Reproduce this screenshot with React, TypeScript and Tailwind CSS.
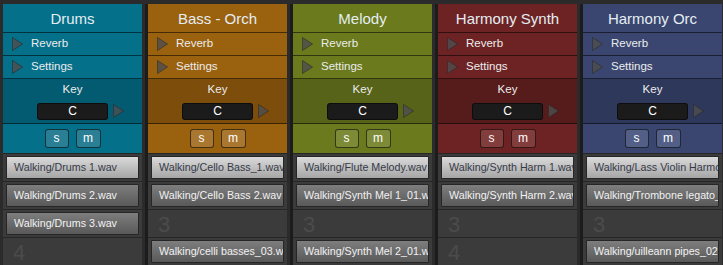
import React from "react";

type Col = {
  title: string;
  main: string;
  key: string;
  btn: string;
  clips: (string | null)[];
};

const cols: Col[] = [
  {
    title: "Drums",
    main: "bg-[#04708a]",
    key: "bg-[#035b71]",
    btn: "bg-[#2b7f94]",
    clips: ["Walking/Drums 1.wav", "Walking/Drums 2.wav", "Walking/Drums 3.wav", null],
  },
  {
    title: "Bass - Orch",
    main: "bg-[#9a610f]",
    key: "bg-[#7c4d0b]",
    btn: "bg-[#a9772f]",
    clips: ["Walking/Cello Bass_1.wav", "Walking/Cello Bass 2.wav", null, "Walking/celli basses_03.wav"],
  },
  {
    title: "Melody",
    main: "bg-[#6a7a1d]",
    key: "bg-[#566319]",
    btn: "bg-[#7d8b39]",
    clips: ["Walking/Flute Melody.wav", "Walking/Synth Mel 1_01.wav", null, "Walking/Synth Mel 2_01.wav"],
  },
  {
    title: "Harmony Synth",
    main: "bg-[#6d2323]",
    key: "bg-[#561b1b]",
    btn: "bg-[#823d3d]",
    clips: ["Walking/Synth Harm 1.wav", "Walking/Synth Harm 2.wav", null, null],
  },
  {
    title: "Harmony Orc",
    main: "bg-[#3a4670]",
    key: "bg-[#2e385b]",
    btn: "bg-[#535f86]",
    clips: ["Walking/Lass Violin Harmony.wav", "Walking/Trombone legato_01.wav", null, "Walking/uilleann pipes_02.wav"],
  },
];

function Tri({ className = "" }: { className?: string }) {
  return (
    <svg width="11" height="14" viewBox="0 0 11 14" className={className}>
      <polygon points="0.5,0.5 10.5,7 0.5,13.5" fill="rgba(78,78,78,0.82)" stroke="rgba(40,40,40,0.55)" strokeWidth="1" />
    </svg>
  );
}

function Column({ c }: { c: Col }) {
  return (
    <div className="w-[139px] shrink-0 flex flex-col">
      <div className={`${c.main} h-[29px] border-b border-[rgba(0,0,0,0.55)] flex items-center justify-center text-[15px] text-[#e4eef2] leading-none pt-[1px]`}>
        {c.title}
      </div>
      <div className={`${c.main} h-[23px] border-b border-[rgba(0,0,0,0.55)] flex items-center pl-[9px] gap-[8px] text-[11.5px] text-[#ececec]`}>
        <Tri />
        <span>Reverb</span>
      </div>
      <div className={`${c.main} h-[23px] border-b border-[rgba(0,0,0,0.55)] flex items-center pl-[9px] gap-[8px] text-[11.5px] text-[#ececec]`}>
        <Tri />
        <span>Settings</span>
      </div>
      <div className={`${c.key} h-[45px] border-b border-[rgba(0,0,0,0.55)] flex flex-col items-center text-[#ececec]`}>
        <div className="text-[11.5px] leading-none mt-[5px]">Key</div>
        <div className="flex items-center mt-[7px]">
          <div className="w-[16px]" />
          <div className="w-[71px] h-[17px] bg-[#1b1b1b] border border-[rgba(0,0,0,0.5)] rounded-[3px] flex items-center justify-center text-[12px] text-white">
            C
          </div>
          <Tri className="ml-[5px]" />
        </div>
      </div>
      <div className={`${c.main} h-[29px] flex items-center justify-center gap-[7px]`}>
        <div className={`${c.btn} w-[24px] h-[19px] rounded-[3px] border border-[rgba(0,0,0,0.6)] flex items-center justify-center text-[12px] text-white leading-none pb-[2px]`}>
          s
        </div>
        <div className={`${c.btn} w-[25px] h-[19px] rounded-[3px] border border-[rgba(0,0,0,0.6)] flex items-center justify-center text-[12px] text-white leading-none pb-[2px]`}>
          m
        </div>
      </div>
      <div className="bg-[#3b3b3b] flex flex-col">
        {c.clips.map((clip, i) => (
          <div key={i} className="h-[28px] border-t border-[#262626] pt-[2px] px-[3px] overflow-hidden">
            {clip ? (
              <div
                className={`h-[23px] w-[133px] border border-[#262626] rounded-[1px] flex items-center pl-[7px] overflow-hidden whitespace-nowrap text-[10.7px] ${
                  i === 0
                    ? "bg-gradient-to-b from-[#dadada] to-[#a6a6a6] text-[#363a48]"
                    : "bg-gradient-to-b from-[#7e7e7e] to-[#595959] text-[#f2f2f2]"
                }`}
              >
                {clip}
              </div>
            ) : (
              <div className="pl-[7px] pt-[2px] text-[22px] leading-none text-[#4b4b4b]">{i + 1}</div>
            )}
          </div>
        ))}
      </div>
    </div>
  );
}

export default function App() {
  return (
    <div
      className="w-[723px] h-[265px] overflow-hidden bg-[#2b2b2b] flex pl-[3px] pt-[4px]"
      style={{ fontFamily: '"Liberation Sans", Arial, sans-serif' }}
    >
      {cols.map((c, i) => (
        <div key={i} className="flex shrink-0">
          <Column c={c} />
          {i < cols.length - 1 && (
            <div className="flex">
              <div className="w-[3px] bg-[#2b2b2b]" />
              <div className="w-[3px] bg-[#1c1c1c]" />
            </div>
          )}
        </div>
      ))}
    </div>
  );
}
